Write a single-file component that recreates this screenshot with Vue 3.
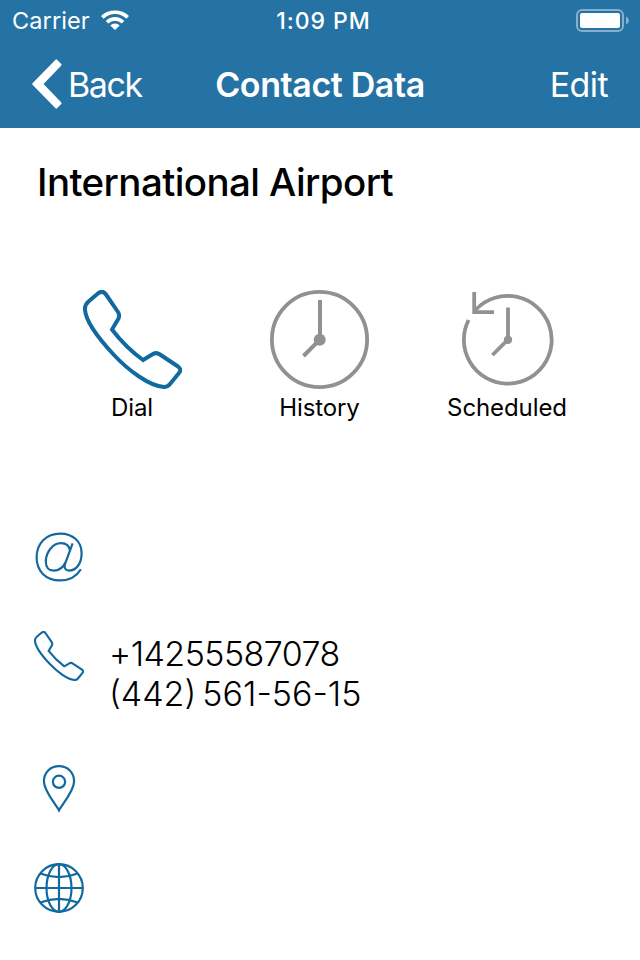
<template>
  <div class="screen">
    <header class="header">
      <div class="status-bar">
        <div class="carrier">
          <span class="carrier-name">Carrier</span>
          <svg class="wifi" viewBox="0 0 28 20">
            <path d="M0 6.1 A20 20 0 0 1 28 6.1 L25.4 8.8 A16.2 16.2 0 0 0 2.6 8.8 Z" />
            <path d="M4.7 10.9 A13.3 13.3 0 0 1 23.3 10.9 L20.7 13.5 A9.6 9.6 0 0 0 7.3 13.5 Z" />
            <path d="M9.3 15.4 A6.8 6.8 0 0 1 18.7 15.4 L14 20 Z" />
          </svg>
        </div>
        <span class="time">1:09 PM</span>
        <svg class="battery" viewBox="0 0 53 23">
          <rect x="1" y="1" width="46" height="21" rx="5" fill="none" stroke="#86b0cb" stroke-width="2" />
          <rect x="4" y="4" width="40" height="15" rx="2" fill="#fff" />
          <path d="M50 7.5 Q53 9 53 11.5 Q53 14 50 15.5 Z" fill="#86b0cb" />
        </svg>
      </div>
      <nav class="nav-bar">
        <button class="back">
          <svg class="chevron" viewBox="0 0 30 50">
            <path d="M23.5 0.7 Q24.3 0 25 0.7 L29.3 5 Q30 5.8 29.3 6.5 L11.5 25 L29.3 43.5 Q30 44.2 29.3 45 L25 49.3 Q24.3 50 23.5 49.3 L0.5 25.7 Q0 25 0.5 24.3 Z" />
          </svg>
          <span class="back-label">Back</span>
        </button>
        <h1 class="title">Contact Data</h1>
        <button class="edit">Edit</button>
      </nav>
    </header>

    <h2 class="contact-name">{{ contact.name }}</h2>

    <div class="actions">
      <button class="action">
        <svg class="action-icon blue" viewBox="0 0 99 99">
          <path :d="phonePath" stroke-width="4" />
        </svg>
        <span class="action-label">Dial</span>
      </button>
      <button class="action">
        <svg class="action-icon grey" viewBox="0 0 99 99">
          <circle cx="49.5" cy="49.5" r="47.6" stroke-width="3.8" />
          <path d="M50 10 V49.5 L33.5 66" stroke-width="4" />
          <circle class="solid" cx="49.7" cy="49.7" r="6" />
        </svg>
        <span class="action-label">History</span>
      </button>
      <button class="action">
        <svg class="action-icon grey" viewBox="0 0 99 99">
          <path d="M10.6 30 A43.9 43.9 0 1 0 19 18.5 L16.5 21.5" stroke-width="3.8" />
          <path d="M16.2 2 V22.2 H36" stroke-width="3.8" />
          <path d="M50 17.5 V49.5 L34.5 65" stroke-width="3.8" />
          <circle class="solid" cx="50" cy="49.7" r="4.2" />
        </svg>
        <span class="action-label">Scheduled</span>
      </button>
    </div>

    <ul class="details">
      <li class="detail">
        <svg class="detail-icon blue" viewBox="0 0 50 50">
          <path d="M46.9 37.2 C42.5 44.5 35 48.4 26 48.4 C11.5 48.4 2.6 38.8 2.6 25.3 C2.6 11.3 12.2 1.6 26.2 1.6 C39 1.6 47.6 9.5 47.6 21.3 C47.6 31.5 42.3 38.6 35 38.6 C31.3 38.6 30 36 31 32 L38.6 11.3 M36.3 19.5 C35.5 14 32.2 11.2 27 11.2 C18.5 11.2 11.8 20.5 11.8 29.5 C11.8 35.2 14.8 38.6 19.6 38.6 C25.2 38.6 29.5 35 31.7 30" />
        </svg>
      </li>
      <li class="detail phones">
        <svg class="detail-icon blue" viewBox="0 0 99 99">
          <path :d="phonePath" stroke-width="4.2" />
        </svg>
        <div class="numbers">
          <div v-for="number in contact.phones" :key="number" class="number">{{ number }}</div>
        </div>
      </li>
      <li class="detail">
        <svg class="detail-icon blue" viewBox="0 0 50 50">
          <path d="M25 46.4 C22 40.6 9.9 27.2 9.9 17.3 C9.9 8.4 16.3 2.2 25 2.2 C33.7 2.2 40.1 8.4 40.1 17.3 C40.1 27.2 28 40.6 25 46.4 Z" />
          <circle cx="25" cy="17.8" r="6.1" />
        </svg>
      </li>
      <li class="detail">
        <svg class="detail-icon blue" viewBox="0 0 50 50">
          <circle cx="25" cy="25" r="23.8" />
          <ellipse cx="25" cy="25" rx="12.5" ry="23.8" />
          <path d="M25 1 V49 M1 25 H49 M6.3 10.5 Q25 17.7 43.7 10.5 M6.3 39.5 Q25 32.3 43.7 39.5" />
        </svg>
      </li>
    </ul>
  </div>
</template>

<script setup>
const contact = {
  name: 'International Airport',
  phones: ['+14255587078', '(442) 561-56-15']
};

// handset outline, shared by the dial button and the phone row
const phonePath = 'M15.5 3 L5.5 11.5 Q1.5 15 2 20 C3 32 17 50 31 65 C45 80 66 96 81 97 Q84.5 97 87 94 L96 83 Q99 79.5 95 76.5 L77 64.5 Q73.5 62 70 64 L60 70 C49 62 37 50 29 39.5 L35.5 28.5 Q37 25 35 22 L23 4.5 Q20 0 15.5 3 Z';
</script>

<style>
body {
  background: #fff;
}
</style>

<style scoped>
.screen {
  width: 640px;
  height: 960px;
  overflow: hidden;
  background: #fff;
  color: #000;
  font-family: Inter, "Liberation Sans", sans-serif;
}

.header {
  height: 128px;
  background: #2573a4;
  color: #fff;
}

button {
  padding: 0;
  border: none;
  background: none;
  color: inherit;
  font: inherit;
}

.status-bar {
  display: grid;
  grid-template-columns: 1fr auto 1fr;
  align-items: center;
  height: 40px;
  padding: 0 11px 0 12px;
}

.carrier {
  display: flex;
  align-items: center;
}

.carrier-name {
  width: 89px;
  padding-top: 2px;
  font-size: 23.5px;
  line-height: 38px;
  font-weight: 400;
  letter-spacing: 0.1px;
}

.wifi {
  width: 28px;
  height: 20px;
  fill: #fff;
}

.time {
  padding: 2px 0 0 6px;
  font-size: 23px;
  line-height: 38px;
  font-weight: 500;
  letter-spacing: 1px;
}

.battery {
  width: 53px;
  height: 23px;
  justify-self: end;
}

.nav-bar {
  display: grid;
  grid-template-columns: 1fr auto 1fr;
  align-items: center;
  height: 88px;
  padding: 0 32px;
}

.back {
  display: flex;
  align-items: center;
  gap: 6px;
}

.back-label,
.edit {
  padding-top: 1px;
  font-size: 34px;
  line-height: 42px;
  font-weight: 400;
  letter-spacing: -1.4px;
}

.chevron {
  width: 30px;
  height: 50px;
  fill: #fff;
}

.edit {
  justify-self: end;
  letter-spacing: -0.6px;
}

.title {
  margin: 0;
  padding-top: 1px;
  font-size: 34px;
  line-height: 42px;
  font-weight: 600;
  letter-spacing: -0.4px;
}

.contact-name {
  margin: 29px 0 0 37px;
  font-size: 38.5px;
  line-height: 50px;
  font-weight: 500;
  letter-spacing: -0.6px;
  white-space: nowrap;
}

.actions {
  display: flex;
  gap: 27.5px;
  margin: 83px 0 0 52px;
}

.action {
  display: flex;
  flex-direction: column;
  align-items: center;
  width: 160px;
}

.action-icon {
  width: 99px;
  height: 99px;
}

.action-label {
  margin-top: 4px;
  font-size: 24px;
  line-height: 30px;
  letter-spacing: -0.1px;
}

svg {
  display: block;
  flex: none;
}

.blue,
.grey {
  fill: none;
}

.blue {
  stroke: #1269a0;
  stroke-width: 2.2;
}

.grey {
  stroke: #919191;
}

.solid {
  fill: #919191;
  stroke: none;
}

.details {
  margin: 109px 0 0 34px;
  padding: 0;
  list-style: none;
}

.detail {
  display: flex;
  align-items: flex-start;
  height: 50px;
  margin-bottom: 49px;
}

.detail-icon {
  width: 50px;
  height: 50px;
}

.phones {
  height: 84px;
}

.numbers {
  margin: 3px 0 0 25px;
}

.number {
  font-size: 34px;
  line-height: 40px;
  font-weight: 300;
  letter-spacing: -0.55px;
  white-space: nowrap;
}

.number + .number {
  letter-spacing: 0;
  word-spacing: -3.5px;
}
</style>
